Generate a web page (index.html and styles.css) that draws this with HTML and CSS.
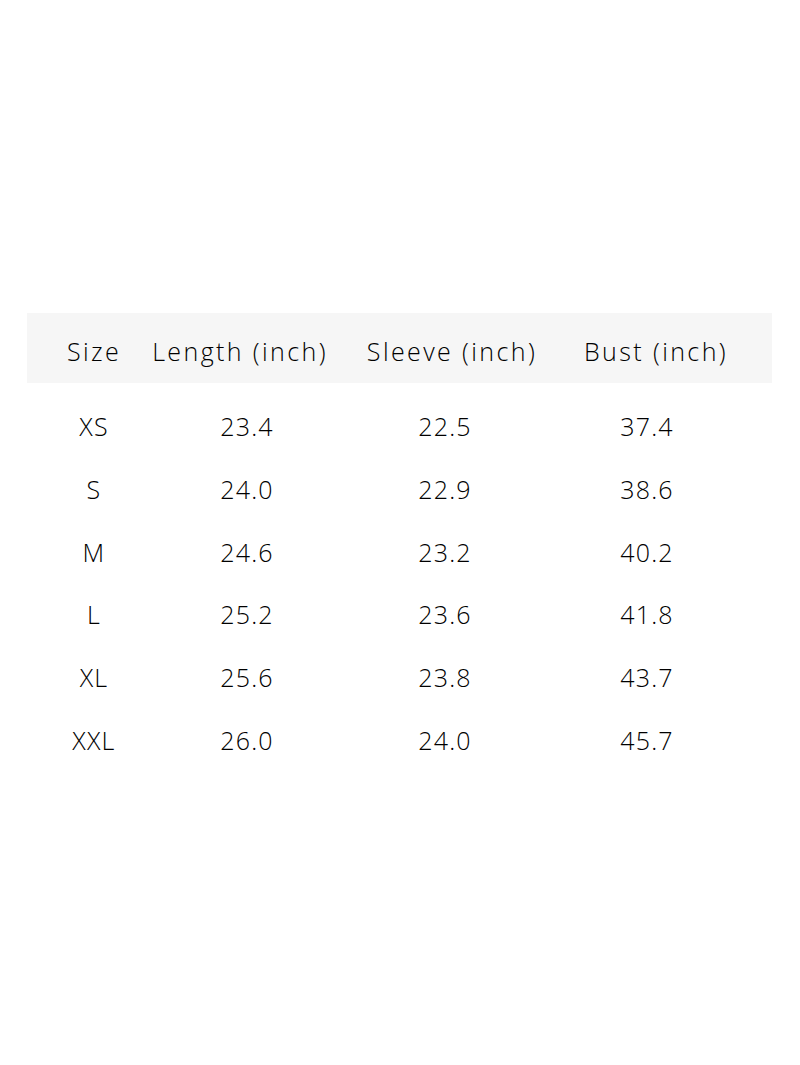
FILE: index.html
```html
<!DOCTYPE html>
<html>
<head>
<meta charset="utf-8">
<link rel="stylesheet" href="styles.css">
</head>
<body>
<div class="chart">
  <div class="head">
    <div>Size</div><div>Length (inch)</div><div>Sleeve (inch)</div><div>Bust (inch)</div>
  </div>
  <div class="rows">
    <div class="row"><div>XS</div><div>23.4</div><div>22.5</div><div>37.4</div></div>
    <div class="row"><div>S</div><div>24.0</div><div>22.9</div><div>38.6</div></div>
    <div class="row"><div>M</div><div>24.6</div><div>23.2</div><div>40.2</div></div>
    <div class="row"><div>L</div><div>25.2</div><div>23.6</div><div>41.8</div></div>
    <div class="row"><div>XL</div><div>25.6</div><div>23.8</div><div>43.7</div></div>
    <div class="row"><div>XXL</div><div>26.0</div><div>24.0</div><div>45.7</div></div>
  </div>
</div>
</body>
</html>
```
FILE: styles.css
```css
html, body {
  margin: 0;
  padding: 0;
  background: #fff;
}
body {
  font-family: "Open Sans", "Liberation Sans", sans-serif;
  font-weight: 300;
  color: #000;
  font-size: 25px;
}
.chart {
  margin: 313px 0 0 27px;
  width: 745px;
}
.head {
  display: grid;
  grid-template-columns: 134px 158px 266px 142px 45px;
  height: 70px;
  align-items: center;
  background: #f6f6f6;
  letter-spacing: 2.4px;
}
.head > div {
  display: flex;
  justify-content: center;
  padding-top: 6px;
  white-space: nowrap;
}
.rows {
  padding-top: 12px;
}
.row {
  display: grid;
  grid-template-columns: 134px 172px 224px 180px 35px;
  height: 62.7px;
  align-items: center;
  text-align: center;
  letter-spacing: 1.2px;
}
```
